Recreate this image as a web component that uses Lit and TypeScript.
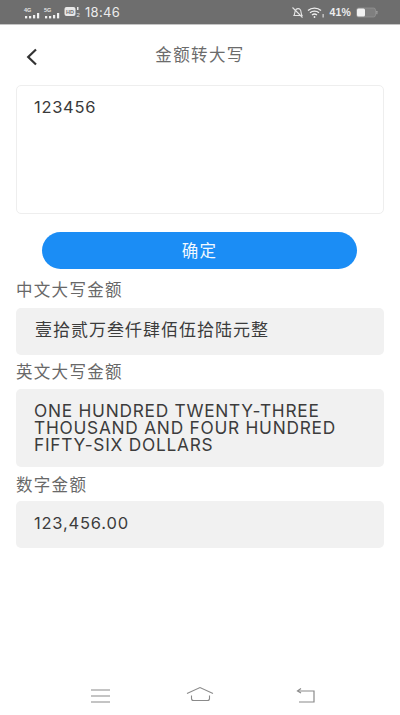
import { LitElement, html, css, svg } from "lit";
import { customElement } from "lit/decorators.js";

const signal = (x: number, label: string) => svg`
  <text x="${x}" y="7.5" font-size="5.5" font-weight="700" fill="#e4e4e4" font-family="Liberation Sans, sans-serif">${label}</text>
  <rect x="${x + 1}" y="12" width="2.2" height="2.4" fill="#f0f0f0"/>
  <rect x="${x + 5}" y="12" width="2.2" height="2.4" fill="#f0f0f0"/>
  <rect x="${x + 9}" y="11" width="2.2" height="3.4" fill="#f0f0f0"/>
  <rect x="${x + 13}" y="9" width="2.2" height="5.4" fill="#f0f0f0"/>`;

@customElement("app-root")
export class AppRoot extends LitElement {
  static styles = css`
    :host {
      display: block;
      width: 400px;
      height: 715px;
      background: #fff;
      font-family: "Liberation Sans", "Noto Sans CJK SC", sans-serif;
      color: #333;
      overflow: hidden;
    }
    .page { display: flex; flex-direction: column; height: 715px; }
    .status {
      height: 25px;
      flex: none;
      background: #6e6e6e;
      border-bottom: 1px solid #c4c4c4;
      box-sizing: border-box;
      display: flex;
      align-items: center;
      justify-content: space-between;
      padding: 0 22px 0 23px;
      color: #ececec;
    }
    .left, .right { display: flex; align-items: center; }
    .time { font-size: 13px; letter-spacing: 0.3px; margin-left: 1px; font-family: "Inter", sans-serif; }
    .pct { font-size: 10.5px; font-weight: 700; margin: 0 5px 0 4px; letter-spacing: 0.2px; }
    .nav {
      height: 60px;
      flex: none;
      display: flex;
      align-items: center;
      justify-content: center;
      position: relative;
      font-size: 16.5px;
      letter-spacing: 1.4px;
      color: #6b6b6b;
      padding-bottom: 2px;
      box-sizing: border-box;
    }
    .back { position: absolute; left: 26px; top: 23px; }
    .content { padding: 0 16px; display: flex; flex-direction: column; }
    .input {
      height: 129px;
      box-sizing: border-box;
      border: 1px solid #eeeeee;
      border-radius: 5px;
      padding: 11px 17px;
      font-size: 16.5px;
      letter-spacing: 0.7px;
      line-height: 20px;
      font-family: "Inter", sans-serif;
      color: #3a3a3a;
    }
    .btn {
      margin: 18px 27px 0 26px;
      height: 37px;
      border-radius: 19px;
      background: #1b8df5;
      color: #f2f8ff;
      font-size: 16.5px;
      letter-spacing: 1.2px;
      padding-bottom: 2px;
      box-sizing: border-box;
      display: flex;
      align-items: center;
      justify-content: center;
    }
    .label { font-size: 16.5px; letter-spacing: 1.3px; color: #686868; line-height: 17px; margin-top: 13px; }
    .label.mid { margin-top: 9px; }
    .label.last { margin-top: 10px; }
    .box {
      margin-top: 9px;
      background: #f1f1f1;
      border-radius: 5px;
      padding: 0 18px 1px 18px;
      min-height: 47px;
      box-sizing: border-box;
      display: flex;
      align-items: center;
      color: #3c3c3c;
    }
    .box.cn { font-size: 17px; letter-spacing: 1px; padding-left: 19px; padding-bottom: 6px; }
    .box.en {
      margin-top: 8px;
      height: 78px;
      font-size: 17.3px;
      line-height: 17px;
      letter-spacing: 0.75px;
      font-family: "Inter", sans-serif;
      padding-right: 20px;
    }
    .box.num { margin-top: 7px; font-size: 16.5px; letter-spacing: 0.8px; font-family: "Inter", sans-serif; padding-bottom: 3px; }
    .bottom {
      margin-top: auto;
      height: 27px;
      flex: none;
      display: flex;
      align-items: flex-start;
      padding-left: 90px;
    }
    .bottom .home { margin-left: 76px; margin-top: -2px; }
    .bottom .ret { margin-left: 82px; margin-top: -1px; }
  `;

  render() {
    return html`<div class="page">
      <div class="status">
        <div class="left">
          <svg width="19" height="16" viewBox="0 0 19 16">${signal(1, "4G")}</svg>
          <svg width="22" height="16" viewBox="0 0 22 16">${signal(2, "5G")}</svg>
          <svg width="20" height="14" viewBox="0 0 20 14">
            <rect x="0.5" y="2" width="11" height="9" rx="2" fill="#e8e8e8"/>
            <text x="2" y="9" font-size="5.5" font-weight="700" fill="#6e6e6e" font-family="Liberation Sans, sans-serif">HD</text>
            <rect x="13" y="2" width="1.5" height="3" fill="#e8e8e8"/>
            <text x="12.5" y="12" font-size="6" fill="#e8e8e8" font-family="Liberation Sans, sans-serif">2</text>
          </svg>
          <span class="time">18:46</span>
        </div>
        <div class="right">
          <svg width="13" height="13" viewBox="0 0 13 13" fill="none" stroke="#e4e4e4" stroke-width="1.1">
            <path d="M3 9.5 C4 8 3.5 5 5 3.5 C6.5 2 8.5 2.5 9.5 4 C10.2 5.5 10 8 11 9.5 Z"/>
            <path d="M1.5 1.5 L11.5 11.5"/>
          </svg>
          <svg style="margin-left:3px" width="18" height="13" viewBox="0 0 18 13" fill="none" stroke="#eeeeee" stroke-width="1.3">
            <path d="M1 4.5 C4.5 1.3 10.5 1.3 14 4.5"/>
            <path d="M3 6.8 C5.5 4.6 9.5 4.6 12 6.8"/>
            <path d="M5 9 C6.5 7.8 8.5 7.8 10 9"/>
            <circle cx="7.5" cy="11" r="0.9" fill="#eee" stroke="none"/>
            <rect x="15.6" y="8" width="1" height="3.5" fill="#eee" stroke="none"/>
          </svg>
          <span class="pct">41%</span>
          <svg width="22" height="11" viewBox="0 0 22 11">
            <rect x="0.5" y="1" width="19" height="9" rx="2" fill="#8a8a8a" fill-opacity="0.6" stroke="#9c9c9c" stroke-width="0.6"/>
            <rect x="1" y="1.5" width="8" height="8" rx="1.5" fill="#f2f2f2"/>
            <rect x="20.4" y="3.8" width="1" height="3.4" rx="0.5" fill="#aaa"/>
          </svg>
        </div>
      </div>
      <div class="nav">
        <svg class="back" width="12" height="18" viewBox="0 0 12 18" fill="none" stroke="#333" stroke-width="2.2">
          <path d="M10 1.5 L2.2 9 L10 16.5"/>
        </svg>
        金额转大写
      </div>
      <div class="content">
        <div class="input">123456</div>
        <div class="btn">确定</div>
        <div class="label">中文大写金额</div>
        <div class="box cn">壹拾贰万叁仟肆佰伍拾陆元整</div>
        <div class="label mid">英文大写金额</div>
        <div class="box en">ONE HUNDRED TWENTY-THREE THOUSAND AND FOUR HUNDRED FIFTY-SIX DOLLARS</div>
        <div class="label last">数字金额</div>
        <div class="box num">123,456.00</div>
      </div>
      <div class="bottom">
        <svg width="20" height="16" viewBox="0 0 20 16" stroke="#8a8a8a" stroke-width="1.2">
          <path d="M1 2 H20 M1 8 H20 M1 14 H20"/>
        </svg>
        <svg class="home" width="28" height="16" viewBox="0 0 28 16" fill="none" stroke="#8a8a8a" stroke-width="1.1">
          <path d="M1 7.5 L14 1.5 L27 7.5"/>
          <path d="M5.5 9.5 V12.5 Q5.5 14.5 7.5 14.5 H21.5 Q23.5 14.5 23.5 12.5 V9.5"/>
        </svg>
        <svg class="ret" width="20" height="16" viewBox="0 0 20 16" fill="none" stroke="#8a8a8a" stroke-width="1.2">
          <path d="M2 4 H18 V15 H3"/>
          <path d="M5 1.5 L1.5 4 L5 6"/>
        </svg>
      </div>
    </div>`;
  }
}
